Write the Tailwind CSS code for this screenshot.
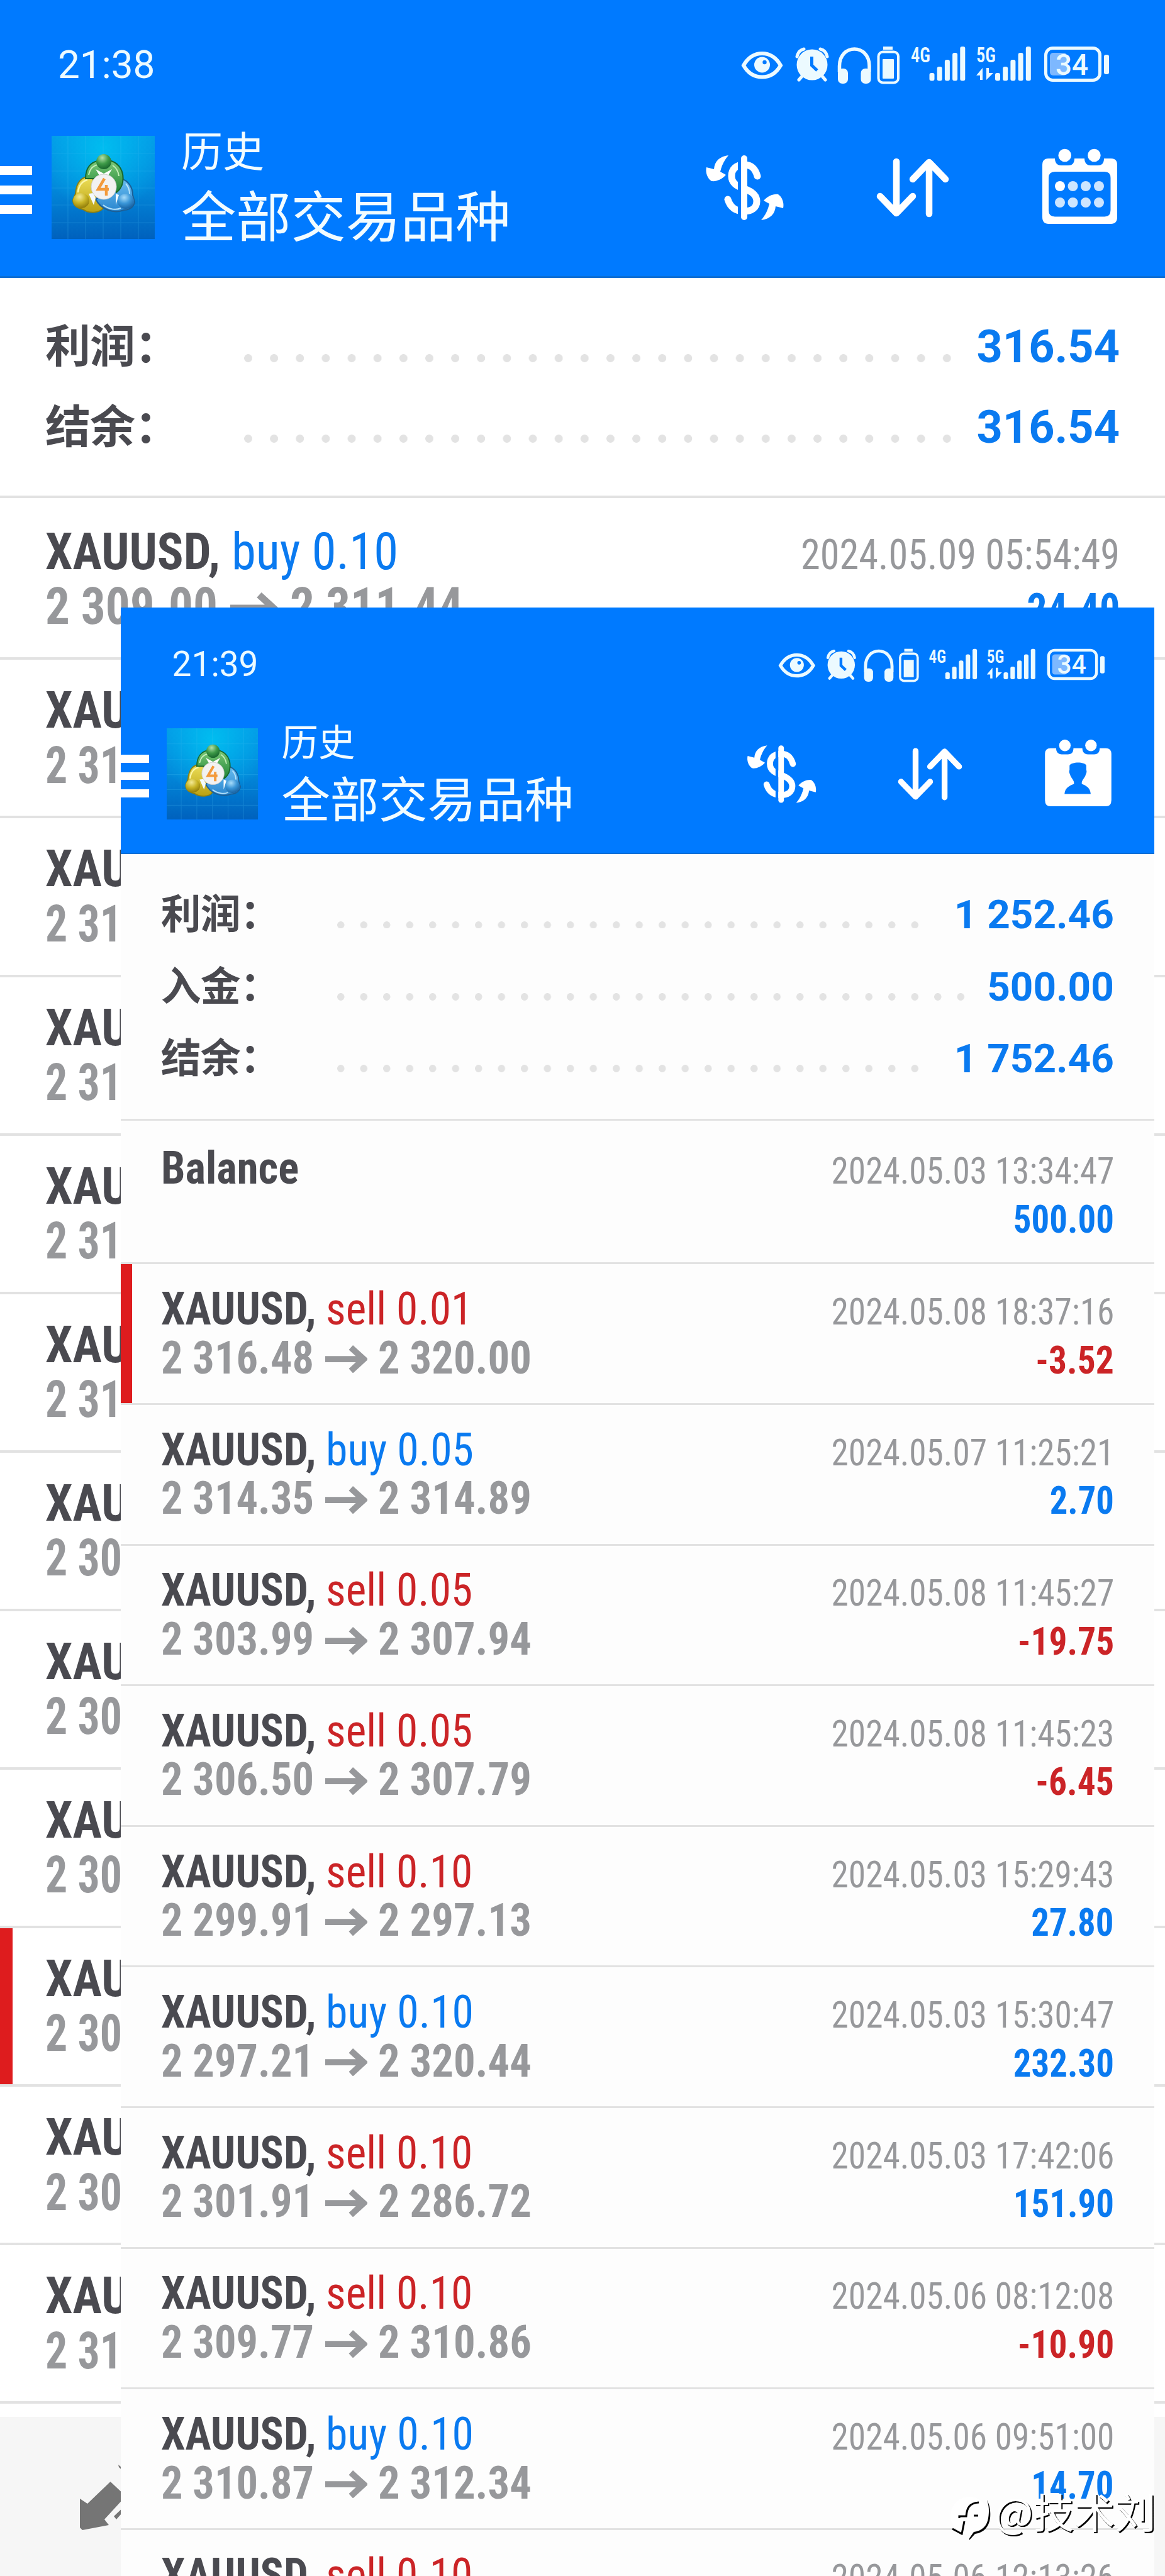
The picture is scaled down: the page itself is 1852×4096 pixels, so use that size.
<!DOCTYPE html>
<html lang="zh-CN">
<head>
<meta charset="utf-8">
<title>历史</title>
<script src="https://cdn.jsdelivr.net/npm/@tailwindcss/browser@4"></script>
</head>
<body class="relative w-[1852px] h-[4096px] overflow-hidden bg-white font-['Roboto','Noto_Sans_CJK_SC',sans-serif]">

<!-- shared icon symbols -->
<svg class="absolute size-0" aria-hidden="true">
  <defs>
    <linearGradient id="sky" x1="0" y1="0" x2="0" y2="1"><stop offset="0" stop-color="#0498e6"/><stop offset=".5" stop-color="#0288da"/><stop offset="1" stop-color="#0061bd"/></linearGradient>
    <radialGradient id="glow" cx=".5" cy=".12" r=".62"><stop offset="0" stop-color="#00bdf0"/><stop offset="1" stop-color="#00bdf0" stop-opacity="0"/></radialGradient>
    <linearGradient id="gr" x1="0" y1="0" x2="0" y2="1"><stop offset="0" stop-color="#7cc977"/><stop offset="1" stop-color="#1d8336"/></linearGradient>
    <linearGradient id="ye" x1="0" y1="0" x2="0" y2="1"><stop offset="0" stop-color="#eee05a"/><stop offset="1" stop-color="#b9a012"/></linearGradient>
    <linearGradient id="bl" x1="0" y1="0" x2="0" y2="1"><stop offset="0" stop-color="#68bdf0"/><stop offset="1" stop-color="#2a86cf"/></linearGradient>
    <radialGradient id="gh" cx=".4" cy=".25" r=".8"><stop offset="0" stop-color="#b4e0a8"/><stop offset=".5" stop-color="#3e9a48"/><stop offset="1" stop-color="#14602a"/></radialGradient>
    <radialGradient id="yh" cx=".4" cy=".25" r=".8"><stop offset="0" stop-color="#f3ea96"/><stop offset=".5" stop-color="#c9b526"/><stop offset="1" stop-color="#8a7608"/></radialGradient>
    <radialGradient id="bh" cx=".4" cy=".25" r=".8"><stop offset="0" stop-color="#a8dcfa"/><stop offset=".5" stop-color="#3a96d8"/><stop offset="1" stop-color="#165e9e"/></radialGradient>
  </defs>
  <symbol id="logo" viewBox="0 0 164 164">
    <rect width="164" height="164" fill="url(#sky)"/><rect width="164" height="164" fill="url(#glow)"/>
    <path d="M26 0V164M54 0V164M82 0V164M110 0V164M138 0V164M0 28H164M0 56H164M0 83H164M0 110H164M0 138H164" stroke="#4cc4f4" stroke-opacity=".22" stroke-width="1.2"/>
    <path d="M64 64C46 64 39 76 38 92L34 102C34 114 46 116 50 117C60 124 76 123 82 115L74 92Z" fill="url(#ye)" stroke="#8c7f12" stroke-width="2"/>
    <path d="M110 68C122 71 129 82 129 94L132 105C130 117 118 118 115 118C100 124 78 118 70 100L98 88Z" fill="url(#bl)" stroke="#1c5f96" stroke-width="2"/>
    <path d="M54 68C54 50 63 42 73 40H95C107 44 116 56 113 74C112 82 106 88 103 90L92 66L66 68Z" fill="url(#gr)" stroke="#17672b" stroke-width="2"/>
    <path d="M59 62C61 52 67 47 74 46M107 64C106 56 102 50 97 47" fill="none" stroke="#c4edb8" stroke-width="2"/>
    <path d="M42 90C43 79 49 72 57 70" fill="none" stroke="#fbf6a8" stroke-width="2.500"/>
    <path d="M82 110C92 118 104 118 110 115M118 76C123 82 124 88 124 92" fill="none" stroke="#b6e2fb" stroke-width="2"/>
    <path d="M70 53L83 60L96 53L90 63H76Z" fill="#fff"/><path d="M59 92L67 110L70 99L66 91ZM102 92V110L107 94Z" fill="#f4fbff"/>
    <circle cx="83" cy="41" r="12" fill="url(#gh)"/><ellipse cx="47" cy="103" rx="13" ry="12" fill="url(#yh)"/><ellipse cx="118" cy="104" rx="13" ry="12" fill="url(#bh)"/>
    <circle cx="83" cy="81" r="20" fill="#f2f2f2" stroke="#cfcfcf"/>
    <path d="M84 68L74 85H91M87 78V95" fill="none" stroke="#f39a3c" stroke-width="4.5"/>
  </symbol>
  <symbol id="money" viewBox="1110 205 150 237">
    <path d="M1204 280C1200 266 1193 262 1183 262C1170 262 1163 269 1163 280C1163 291 1171 296 1183 300C1197 305 1203 311 1203 320C1203 331 1194 336 1183 336C1170 336 1161 330 1157 317" fill="none" stroke="#fff" stroke-width="11" stroke-linecap="round"/>
    <path d="M1175.500 245V352" stroke="#007aff" stroke-width="5"/>
    <path d="M1183 252V345" stroke="#fff" stroke-width="10" stroke-linecap="round"/>
    <path d="M1158 247C1143 249 1136 257 1135 269L1123 266C1121 275 1125 284 1131 288C1139 289 1148 285 1154 278L1145 273C1147 264 1151 255 1158 247Z" fill="#fff"/>
    <path d="M1158 247C1143 249 1136 257 1135 269L1123 266C1121 275 1125 284 1131 288C1139 289 1148 285 1154 278L1145 273C1147 264 1151 255 1158 247Z" fill="#fff" transform="rotate(180 1184 298.500)"/>
  </symbol>
  <symbol id="sort" viewBox="1385 205 130 237">
    <path d="M1425 257V336M1399 312L1425 339L1451 312M1477 340V260M1451 285L1477 258L1503 285" fill="none" stroke="#fff" stroke-width="10.500" stroke-linecap="round" stroke-linejoin="round"/>
  </symbol>
  <symbol id="cal-days" viewBox="1650 205 132 237">
    <path d="M1667 252H1677C1677 259 1681 263 1687 263H1698C1705 263 1708 259 1708 252H1724C1724 259 1728 263 1734 263H1745C1752 263 1755 259 1755 252H1766Q1776 252 1776 262V345Q1776 356 1766 356H1667Q1657 356 1657 345V262Q1657 252 1667 252ZM1677 273Q1667 273 1667 283V334Q1667 344.500 1677 344.500H1756Q1765.500 344.500 1765.500 334V283Q1765.500 273 1756 273Z" fill="#fff" fill-rule="evenodd"/>
    <circle cx="1692.700" cy="247" r="10.300" fill="#fff"/><circle cx="1739.400" cy="247" r="10.300" fill="#fff"/>
    <g fill="#cde5ff"><circle cx="1685" cy="296" r="8" fill="#fff"/><circle cx="1705.500" cy="296" r="8"/><circle cx="1726" cy="296" r="8"/><circle cx="1747" cy="296" r="8"/><circle cx="1685" cy="322" r="8"/><circle cx="1705.500" cy="322" r="8"/><circle cx="1726" cy="322" r="8"/><circle cx="1747" cy="322" r="8"/></g>
  </symbol>
  <symbol id="cal-user" viewBox="1650 205 132 237">
    <path d="M1667 252H1677C1677 259 1681 263 1687 263H1698C1705 263 1708 259 1708 252H1724C1724 259 1728 263 1734 263H1745C1752 263 1755 259 1755 252H1766Q1776 252 1776 262V345Q1776 356 1766 356H1667Q1657 356 1657 345V262Q1657 252 1667 252Z" fill="#fff"/>
    <circle cx="1692.700" cy="247" r="10.300" fill="#fff"/><circle cx="1739.400" cy="247" r="10.300" fill="#fff"/>
    <path d="M1692 334C1693 322 1702 319 1709 316C1710 309 1703 305 1702 299C1700 296 1700 293 1701 291V283C1705 276 1728 276 1731 283V291C1732 293 1732 296 1730 299C1729 305 1722 309 1723 316C1730 319 1738 322 1739 334Z" fill="#007aff"/>
  </symbol>
  <symbol id="status" viewBox="1170 0 600 205">
    <g fill="#ecfaff" stroke="none">
      <path d="M1182 104C1190 90 1200 85 1211.500 85S1233 90 1241 104C1233 118 1223 122.500 1211.500 122.500S1190 118 1182 104Z" fill="none" stroke="#ecfaff" stroke-width="6"/>
      <circle cx="1211.500" cy="103" r="12.500"/><circle cx="1215.500" cy="99" r="3.200" fill="#007aff"/>
      <circle cx="1291" cy="103" r="24.500"/>
      <path d="M1267 90Q1269 80 1278 78M1304 78Q1313 80 1315 90M1276 120L1270 127M1306 120L1312 127" fill="none" stroke="#ecfaff" stroke-width="5" stroke-linecap="round"/>
      <path d="M1290.500 90V104L1299 112" fill="none" stroke="#007aff" stroke-width="5"/>
      <path d="M1334.500 115V105C1334.500 69 1382 69 1382 105V115" fill="none" stroke="#ecfaff" stroke-width="5.500"/>
      <rect x="1332" y="109" width="16" height="24" rx="7"/><rect x="1368.500" y="109" width="16" height="24" rx="7"/>
      <rect x="1404" y="74" width="15" height="5"/><rect x="1396.500" y="82.500" width="31.500" height="49" rx="7" fill="none" stroke="#ecfaff" stroke-width="4"/><rect x="1403" y="94" width="18" height="31" rx="1"/>
      <text x="1448" y="99" font-family="Roboto Condensed" font-size="34" font-weight="600" textLength="31" lengthAdjust="spacingAndGlyphs">4G</text>
      <rect x="1477.500" y="116" width="8" height="12.500" rx="3"/><rect x="1489.700" y="106" width="8" height="22.500" rx="3"/><rect x="1501.900" y="95" width="8" height="33.500" rx="3"/><rect x="1514.100" y="84" width="8" height="44.500" rx="3"/><rect x="1526.300" y="74" width="8" height="54.500" rx="3"/>
      <text x="1552" y="99" font-family="Roboto Condensed" font-size="34" font-weight="600" textLength="31" lengthAdjust="spacingAndGlyphs">5G</text>
      <path d="M1562 127V108L1552 120H1558V127ZM1568 108V127L1579 116H1572V108Z"/>
      <rect x="1582" y="116" width="8" height="12.500" rx="3"/><rect x="1594.200" y="106" width="8" height="22.500" rx="3"/><rect x="1606.400" y="95" width="8" height="33.500" rx="3"/><rect x="1618.600" y="84" width="8" height="44.500" rx="3"/><rect x="1630.800" y="74" width="8" height="54.500" rx="3"/>
      <rect x="1662.500" y="76.500" width="86" height="51" rx="11" fill="none" stroke="#ecfaff" stroke-width="5"/>
      <rect x="1669" y="84" width="27" height="36" rx="5" fill="#7db8ff"/>
      <text x="1678" y="118.500" font-family="Roboto" font-size="47" font-weight="500" textLength="52" lengthAdjust="spacingAndGlyphs">34</text>
      <rect x="1755" y="87" width="8" height="31" rx="3"/>
    </g>
  </symbol>
  <symbol id="arrow" viewBox="0 0 76 50">
    <path d="M0 25H70M46 4L69 25L46 46" fill="none" stroke="#97989b" stroke-width="11"/>
  </symbol>
</svg>

<!-- first phone capture -->
<main id="back" class="relative w-[1852px] h-[4096px] overflow-hidden bg-white"></main>

<!-- second phone capture laid over the first -->
<div class="absolute left-[192px] top-[966px]">
  <section id="front" class="[zoom:0.887] w-[1852px] h-[3530px] overflow-hidden bg-[#fdfdfd]"></section>
</div>

<!-- watermark -->
<div class="absolute left-[1510px] top-[3951px] flex items-start">
  <svg class="w-[71px] h-[90px]" viewBox="1510 3951 71 90">
    <circle cx="1541" cy="4000" r="30" fill="#fff"/>
    <path d="M1569 3975C1574 3984 1575 3996 1574 4004C1572 4018 1564 4027 1550 4029L1541 4039V4036L1548 4026C1562 4024 1569 4016 1571 4004C1573 3992 1572 3984 1569 3975Z" fill="#000"/>
    <path d="M1525 4004V4001H1536C1537 3988 1541 3980 1556 3979M1533 4009L1529 4029L1514 4021" fill="none" stroke="#000" stroke-width="3"/>
    <path d="M1548 4000H1555" stroke="#000" stroke-width="3"/>
  </svg>
  <span class="-mt-[4px] text-[65px] leading-[90px] whitespace-nowrap text-white font-['Noto_Sans_CJK_SC',sans-serif] [text-shadow:1.5px_1.500px_0_#000,2px_2px_0_#000]">@技术刘</span>
</div>

<script>
const fit = (text, width, cls = '', right = false) =>
  `<span class="flex shrink-0 ${right ? 'justify-end' : 'justify-start'}" style="width:${width}px"><span data-fit class="shrink-0 whitespace-pre ${right ? 'origin-right' : 'origin-left'} ${cls}">${text}</span></span>`;

const header = (time, cal) => `
  <header class="flex flex-col h-[442px] bg-[#007aff] border-b-[3px] border-[#0a6fd6]">
    <div class="flex justify-between h-[205px] pl-[92px] pr-[82px]">
      <span class="text-[62px] leading-[205px] font-[450] text-[#ecfaff]">${time}</span>
      <svg class="w-[600px] h-[205px]"><use href="#status"/></svg>
    </div>
    <div class="flex h-[234px]">
      <div class="flex flex-col gap-[17px] w-[51px] pt-[59px]">
        <i class="h-[14px] bg-white"></i><i class="h-[14px] bg-white"></i><i class="h-[14px] bg-white"></i>
      </div>
      <svg class="size-[164px] ml-[31px] mt-[11px]"><use href="#logo"/></svg>
      <div class="flex flex-col w-[822px] ml-[42px] -mt-[6px] text-[#f2fcff]">
        <span class="text-[66px] leading-[88px]">历史</span>
        <span class="mt-[5px] text-[87.250px] leading-[110px]">全部交易品种</span>
      </div>
      <svg class="w-[150px] h-[237px]"><use href="#money"/></svg>
      <svg class="w-[130px] h-[237px] ml-[125px]"><use href="#sort"/></svg>
      <svg class="w-[132px] h-[237px] ml-[135px]"><use href="#${cal}"/></svg>
    </div>
  </header>`;

const summary = rows => `
  <div class="pt-[45.500px] pb-[43px] border-b-4 border-[#e2e2e2]">
    ${rows.map(([label, value, dots]) => `
    <div class="flex items-baseline h-[128.700px] pl-[72px] pr-[72px] text-[72px] leading-[128.700px] font-bold whitespace-nowrap">
      <span class="w-[316px] tracking-[-1px] text-[#4a4a50]">${label}</span>
      <i class="h-[13px] mb-[8px] bg-[radial-gradient(circle_at_6.5px_6.5px,#e3e3e3_6px,transparent_6.8px)] bg-[length:41.15px_13px]" style="width:${dots * 41.15 - 27}px"></i>
      <span class="ml-auto text-[#0a7af0]">${value}</span>
    </div>`).join('')}
  </div>`;

const row = ({ side, lot, from, to, date, profit, title, mark, first }) => {
  const tone = side === 'sell' ? 'text-[#cb2427]' : 'text-[#0a7af0]';
  const sign = profit && profit[0] === '-' ? 'text-[#cb2427]' : 'text-[#0a7af0]';
  const profitWidth = profit ? [...profit].reduce((w, c) => w + (c === '.' ? 17.5 : c === '-' ? 25 : 32.6), 0) : 0;
  return `
  <div class="relative border-b-4 border-[#e2e2e2] pl-[72px] pr-[72px] font-['Roboto_Condensed'] text-[82px] leading-[87.300px] ${first ? 'h-[257.500px] pt-[42px]' : 'h-[252.100px] pt-[37px]'}">
    ${mark ? '<i class="absolute left-0 inset-y-0 w-[20px] bg-[#de1c1e]"></i>' : ''}
    <div class="flex items-baseline h-[87.300px]">
      ${title ? fit(title, 247, 'font-bold text-[#4a4a50]') : fit('XAUUSD,', 278, 'font-bold text-[#4a4a50]')}
      ${side ? `<span class="w-[18px]"></span>` + fit(`${side} ${lot}`, side === 'sell' ? 263 : 265, tone) : ''}
      ${date ? `<span class="ml-auto"></span>` + fit(date, 507, 'text-[67px] text-[#97989b]', true) : ''}
    </div>
    <div class="flex items-baseline h-[87.300px] font-bold text-[#97989b] ${from ? '' : 'pt-[5px]'}">
      ${from ? fit(from, from.length > 4 ? 274 : 122) : ''}
      ${to ? `<svg class="w-[76px] h-[50px] ml-[20px] mr-[19px] -mb-[1px]"><use href="#arrow"/></svg>` + fit(to, 275) : ''}
      ${profit ? `<span class="ml-auto"></span>` + fit(profit, profitWidth, 'text-[68px] ' + sign, true) : ''}
    </div>
  </div>`;
};

document.getElementById('back').innerHTML =
  header('21:38', 'cal-days') +
  summary([['利润：', '316.54', 28], ['结余：', '316.54', 28]]) +
  row({ first: true, side: 'buy', lot: '0.10', from: '2 309.00', to: '2 311.44', date: '2024.05.09 05:54:49', profit: '24.40' }) +
  ['2 31', '2 31', '2 31', '2 31', '2 31', '2 30', '2 30', '2 30', '2 30', '2 30', '2 31']
    .map((from, i) => row({ from, mark: i === 8 })).join('') +
  `<footer class="mt-[21px] h-[260px] pl-[120px] pt-[70px] bg-[#f6f6f6]">
     <svg class="w-[80px] h-[120px]" viewBox="120 3914 80 120"><path d="M175.500 3947L200 3970L166 4007L173 4016L131 4024L127 4020V3974L139 3982ZM188 3920L200 3930V3934L189 3924ZM181 4002L200 3984V3990L185 4007Z" fill="#757575"/></svg>
   </footer>`;

document.getElementById('front').innerHTML =
  header('21:39', 'cal-user') +
  summary([['利润：', '1 252.46', 26], ['入金：', '500.00', 28], ['结余：', '1 752.46', 26]]) +
  [
    { first: true, title: 'Balance', date: '2024.05.03 13:34:47', profit: '500.00' },
    { mark: true, side: 'sell', lot: '0.01', from: '2 316.48', to: '2 320.00', date: '2024.05.08 18:37:16', profit: '-3.52' },
    { side: 'buy', lot: '0.05', from: '2 314.35', to: '2 314.89', date: '2024.05.07 11:25:21', profit: '2.70' },
    { side: 'sell', lot: '0.05', from: '2 303.99', to: '2 307.94', date: '2024.05.08 11:45:27', profit: '-19.75' },
    { side: 'sell', lot: '0.05', from: '2 306.50', to: '2 307.79', date: '2024.05.08 11:45:23', profit: '-6.45' },
    { side: 'sell', lot: '0.10', from: '2 299.91', to: '2 297.13', date: '2024.05.03 15:29:43', profit: '27.80' },
    { side: 'buy', lot: '0.10', from: '2 297.21', to: '2 320.44', date: '2024.05.03 15:30:47', profit: '232.30' },
    { side: 'sell', lot: '0.10', from: '2 301.91', to: '2 286.72', date: '2024.05.03 17:42:06', profit: '151.90' },
    { side: 'sell', lot: '0.10', from: '2 309.77', to: '2 310.86', date: '2024.05.06 08:12:08', profit: '-10.90' },
    { side: 'buy', lot: '0.10', from: '2 310.87', to: '2 312.34', date: '2024.05.06 09:51:00', profit: '14.70' },
    { side: 'sell', lot: '0.10', date: '2024.05.06 12:13:26' },
  ].map(row).join('');

// squeeze each text run to its column width
const squeeze = () => document.querySelectorAll('[data-fit]').forEach(el => {
  el.style.transform = 'none';
  const k = el.parentElement.getBoundingClientRect().width / el.getBoundingClientRect().width;
  el.style.transform = `scaleX(${k})`;
});
squeeze();
addEventListener('load', squeeze);
document.fonts.ready.then(squeeze);
</script>
</body>
</html>
